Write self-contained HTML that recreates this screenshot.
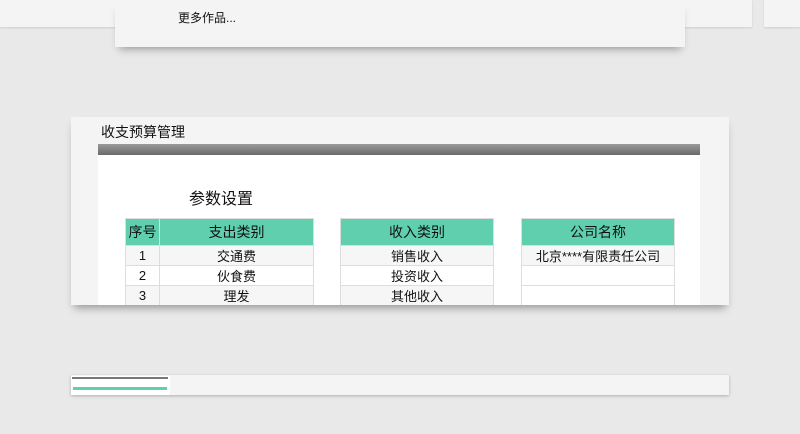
<!DOCTYPE html>
<html><head><meta charset="utf-8"><style>
*{margin:0;padding:0;box-sizing:border-box}
body{width:800px;height:434px;background:#e9e9e9;position:relative;overflow:hidden;font-family:"Liberation Sans","Noto Sans CJK SC",sans-serif;color:#111}
.abs{position:absolute}
table{position:absolute;border-collapse:collapse;font-size:13px}
td{border:1px solid #ddd;text-align:center;height:20px;padding:0;background:#f5f6f5}
tr.h td{background:#5fcfae;height:27px;font-size:14px;border-color:#ddd}
tr.w td{background:#fff}
</style></head><body>
<div class="abs" style="left:0;top:0;width:752px;height:27px;background:#f4f4f4;box-shadow:0 1px 2px rgba(0,0,0,.12)"></div>
<div class="abs" style="left:764px;top:0;width:36px;height:27px;background:#f4f4f4;box-shadow:0 1px 2px rgba(0,0,0,.12)"></div>
<div class="abs" style="left:115px;top:0;width:570px;height:47px;background:#f4f4f4;box-shadow:0 6px 8px -4px rgba(0,0,0,.35)"></div>
<div class="abs" style="left:178px;top:9px;font-size:12px">更多作品...</div>

<div class="abs" style="left:71px;top:117px;width:658px;height:188px;background:#f4f4f4;box-shadow:0 6px 8px -3px rgba(0,0,0,.35)"></div>
<div class="abs" style="left:101px;top:122px;font-size:14px">收支预算管理</div>
<div class="abs" style="left:98px;top:144px;width:602px;height:11px;background:linear-gradient(#9a9a9a,#6a6a6a)"></div>
<div class="abs" style="left:98px;top:155px;width:602px;height:150px;background:#fff;overflow:hidden">
<div class="abs" style="left:91px;top:30px;font-size:16px">参数设置</div>
<table style="left:27px;top:63px;width:189px">
<tr class="h"><td style="width:34px">序号</td><td>支出类别</td></tr>
<tr><td>1</td><td>交通费</td></tr>
<tr class="w"><td>2</td><td>伙食费</td></tr>
<tr><td>3</td><td>理发</td></tr>
</table>
<table style="left:242px;top:63px;width:154px">
<tr class="h"><td>收入类别</td></tr>
<tr><td>销售收入</td></tr>
<tr class="w"><td>投资收入</td></tr>
<tr><td>其他收入</td></tr>
</table>
<table style="left:423px;top:63px;width:154px">
<tr class="h"><td>公司名称</td></tr>
<tr><td>北京****有限责任公司</td></tr>
<tr class="w"><td></td></tr>
<tr class="w"><td></td></tr>
</table>
</div>

<div class="abs" style="left:71px;top:375px;width:658px;height:20px;background:#f4f4f4;box-shadow:0 1px 3px rgba(0,0,0,.25)"></div>
<div class="abs" style="left:71px;top:376px;width:99px;height:19px;background:#fff"></div>
<div class="abs" style="left:72px;top:377px;width:96px;height:2px;background:#777"></div>
<div class="abs" style="left:73px;top:387px;width:94px;height:3px;background:#5fcfae"></div>
</body></html>
